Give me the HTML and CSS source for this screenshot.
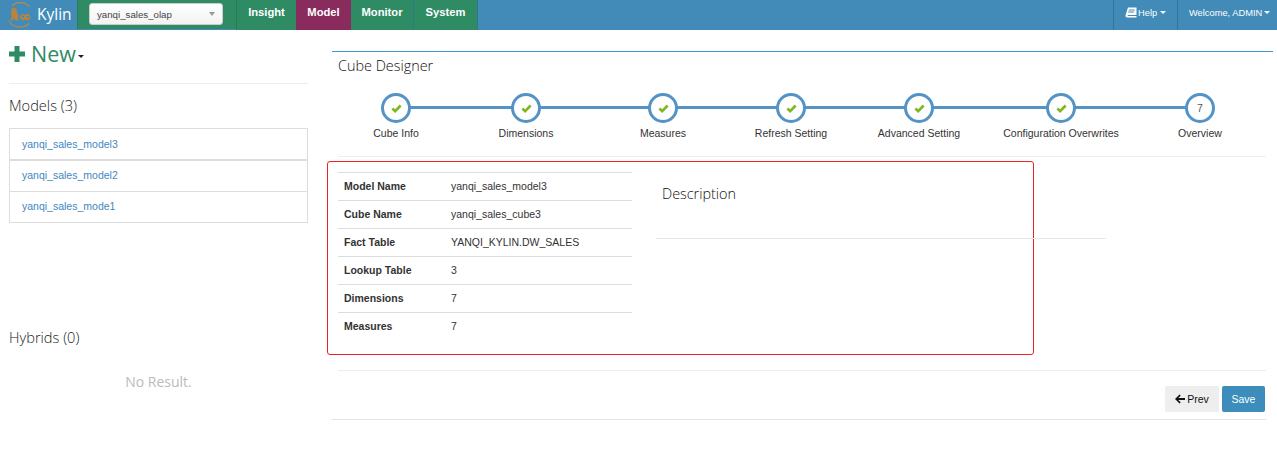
FILE: index.html
```html
<!DOCTYPE html>
<html lang="en">
<head>
<meta charset="utf-8">
<title>Kylin</title>
<link rel="stylesheet" href="styles.css">
</head>
<body>
<header class="navbar">
  <a class="brand">
    <svg class="logo" width="30" height="28" viewBox="0 0 30 28"><g fill="none" stroke="#b98a45" stroke-width="1.1"><path d="M24.500 5.500A13 13 0 0 0 7 4.500"/><path d="M4 20a13 13 0 0 0 20 2.500"/></g><path fill="#b9843c" d="M6 8l3-1.500 2.500 1.500.5 4 1.500 2.500-1 3.500 2 1.500-4.500 0-.5-3-2 3-2.500-.5 2-3.500-1.500-3.500 1.500-2z"/><path fill="#b9843c" d="M14.500 16l3-3 2.500 1 1.500-1.500 3 1.500 1 3-2.500 2.500-3-1-2 1-2.500-2z"/><circle cx="18" cy="16" r="1.100" fill="#4289b8"/><circle cx="23" cy="16" r="1.100" fill="#4289b8"/></svg>
    <span>Kylin</span>
  </a>
  <div class="project">
    <div class="select"><span>yanqi_sales_olap</span><i class="select-caret"></i></div>
  </div>
  <nav class="tabs">
    <a class="tab tab-insight">Insight</a>
    <a class="tab tab-active">Model</a>
    <a class="tab tab-monitor">Monitor</a>
    <a class="tab tab-system">System</a>
  </nav>
  <div class="user-menu">
    <a class="menu-item menu-help">
      <svg width="12" height="11" viewBox="0 0 12 11"><path fill="#fff" d="M3 .5h8.500v7.200L10.800 8H3.200c-.7 0-.9.900-.2 1h8.500v1.500H2.500C1 10.500.2 9.300.6 8zM3.800 2.500l-.2 1h6l.2-1zM3.300 4.500l-.2 1h6l.2-1z"/></svg>
      <span>Help</span><i class="caret"></i>
    </a>
    <a class="menu-item menu-user"><span>Welcome, ADMIN</span><i class="caret"></i></a>
  </div>
</header>

<main class="page">
  <aside class="sidebar">
    <div class="new-row">
      <svg width="16" height="16" viewBox="0 0 16 16"><path fill="#2e8b63" d="M5.500 0h5v5.500H16v5h-5.500V16h-5v-5.500H0v-5h5.500z"/></svg>
      <span class="new-label">New</span><i class="caret caret-dark"></i>
    </div>
    <hr class="side-rule">
    <h3 class="side-title">Models (3)</h3>
    <ul class="model-list">
      <li class="model-item model-first"><a>yanqi_sales_model3</a></li>
      <li class="model-item"><a>yanqi_sales_model2</a></li>
      <li class="model-item"><a>yanqi_sales_mode1</a></li>
    </ul>
    <h3 class="side-title hybrids">Hybrids (0)</h3>
    <p class="no-result">No Result.</p>
  </aside>

  <section class="designer">
    <h2 class="designer-title">Cube Designer</h2>
    <ol class="stepper">
      <li class="step"><span class="dot"><svg width="11" height="9" viewBox="0 0 14 12"><path fill="none" stroke="#83b520" stroke-width="3.500" d="M1.500 6l3.700 3.500L12.500 2"/></svg></span><span class="step-label">Cube Info</span></li>
      <li class="step"><span class="dot"><svg width="11" height="9" viewBox="0 0 14 12"><path fill="none" stroke="#83b520" stroke-width="3.500" d="M1.500 6l3.700 3.500L12.500 2"/></svg></span><span class="step-label">Dimensions</span></li>
      <li class="step"><span class="dot"><svg width="11" height="9" viewBox="0 0 14 12"><path fill="none" stroke="#83b520" stroke-width="3.500" d="M1.500 6l3.700 3.500L12.500 2"/></svg></span><span class="step-label">Measures</span></li>
      <li class="step"><span class="dot"><svg width="11" height="9" viewBox="0 0 14 12"><path fill="none" stroke="#83b520" stroke-width="3.500" d="M1.500 6l3.700 3.500L12.500 2"/></svg></span><span class="step-label">Refresh Setting</span></li>
      <li class="step"><span class="dot"><svg width="11" height="9" viewBox="0 0 14 12"><path fill="none" stroke="#83b520" stroke-width="3.500" d="M1.500 6l3.700 3.500L12.500 2"/></svg></span><span class="step-label">Advanced Setting</span></li>
      <li class="step"><span class="dot"><svg width="11" height="9" viewBox="0 0 14 12"><path fill="none" stroke="#83b520" stroke-width="3.500" d="M1.500 6l3.700 3.500L12.500 2"/></svg></span><span class="step-label">Configuration Overwrites</span></li>
      <li class="step"><span class="dot dot-number">7</span><span class="step-label">Overview</span></li>
    </ol>
    <hr class="rule rule-steps">
    <div class="panel">
      <table class="info">
        <tr><th>Model Name</th><td>yanqi_sales_model3</td></tr>
        <tr><th>Cube Name</th><td>yanqi_sales_cube3</td></tr>
        <tr><th>Fact Table</th><td>YANQI_KYLIN.DW_SALES</td></tr>
        <tr><th>Lookup Table</th><td>3</td></tr>
        <tr><th>Dimensions</th><td>7</td></tr>
        <tr><th>Measures</th><td>7</td></tr>
      </table>
      <div class="description">
        <h3 class="description-title">Description</h3>
        <hr class="description-rule">
      </div>
    </div>
    <hr class="rule rule-panel">
    <div class="actions">
      <button class="btn btn-prev" type="button"><svg width="10" height="10" viewBox="0 0 11 10"><path fill="#111" d="M5 0l1.300 1.300L3.600 4H11v2H3.600l2.700 2.700L5 10 0 5z"/></svg> Prev</button>
      <button class="btn btn-save" type="button">Save</button>
    </div>
    <hr class="rule rule-bottom">
  </section>
</main>
</body>
</html>
```
FILE: styles.css
```css
* { box-sizing: border-box; }
html, body { margin: 0; padding: 0; }
body {
  background: #fff;
  color: #333;
  font-family: "Liberation Sans", Arial, sans-serif;
  font-size: 10.5px;
  overflow: hidden;
}
hr { border: 0; margin: 0; }
ul, ol { list-style: none; margin: 0; padding: 0; }
h2, h3, p { margin: 0; font-weight: 400; }

.navbar { display: flex; height: 30px; background: #428bb9; color: #fff; }
.brand { display: flex; align-items: center; width: 77px; padding-left: 5px; gap: 2px; font: 400 15.5px/1 "Open Sans", sans-serif; }
.project { display: flex; align-items: center; width: 159px; padding: 0 13px 1px 11px; background: #2e8b63; border-left: 1px solid #2a7a5a; height: 29px; }
.select { display: flex; align-items: center; justify-content: space-between; width: 134px; height: 22px; padding: 0 7px; background: linear-gradient(#fff, #f2f2f2); border: 1px solid #ccc; border-radius: 3px; color: #444; font-size: 9.7px; }
.select-caret { width: 0; height: 0; border-left: 3px solid transparent; border-right: 3px solid transparent; border-top: 4px solid #999; }
.tabs { display: flex; }
.tab { display: flex; align-items: center; justify-content: center; height: 30px; padding-bottom: 6px; font-size: 11.2px; font-weight: 700; color: #fff; background: #2e8b63; }
.tab-insight { width: 60px; border-left: 1px solid #2a7a5a; }
.tab-active { width: 55px; background: #8a2b5e; }
.tab-monitor { width: 63px; border-right: 1px solid #2a7a8a; }
.tab-system { width: 64px; border-right: 1px solid #2a7a8a; }
.user-menu { display: flex; margin-left: auto; }
.menu-item { display: flex; align-items: center; height: 30px; padding-bottom: 5px; border-left: 1px solid #33759f; font-size: 9.3px; color: #fff; }
.menu-help { width: 64px; padding-left: 11px; gap: 1px; }
.menu-user { width: 100px; padding-left: 11px; }
.caret { display: inline-block; width: 0; height: 0; margin-left: 2px; border-left: 3.5px solid transparent; border-right: 3.5px solid transparent; border-top: 3.5px solid #fff; }
.caret-dark { border-left-width: 3px; border-right-width: 3px; border-top: 3px solid #222; margin: 6px 0 0 2px; }

.page { display: flex; align-items: flex-start; }
.sidebar { width: 332px; padding: 0 24px 0 9px; flex: none; }
.new-row { display: flex; align-items: center; height: 46px; padding-top: 1px; }
.new-label { margin-left: 6px; font: 400 21.500px/1 "Open Sans", sans-serif; color: #2e8b63; }
.side-rule { height: 1px; margin-top: 7px; background: #eee; }
.side-title { font: 300 14.6px/18px "Open Sans", sans-serif; color: #222; margin-top: 12px; }
.model-list { margin-top: 14px; }
.model-item { height: 31px; border: 1px solid #ddd; border-top: 0; padding: 0 12px 3px; display: flex; align-items: center; color: #3f87c2; }
.model-first { height: 33px; padding-bottom: 1px; border-top: 1px solid #ddd; border-bottom-width: 2px; }
.hybrids { margin-top: 105px; }
.no-result { margin-top: 26px; text-align: center; font: 400 14px/20px "Open Sans", sans-serif; color: #bbb; }

.designer { width: 941px; flex: none; margin-top: 21px; padding: 0 7px 0 6px; border-top: 1px solid #3f98d0; }
.designer-title { font: 300 14.4px/20px "Open Sans", sans-serif; color: #111; margin-top: 4px; }
.stepper { position: relative; display: grid; grid-template-columns: 130px 130px 144px 112px 144px 140px 138px; margin: 17px 0 0 -7px; }
.stepper::before { content: ""; position: absolute; left: 65px; right: 69px; top: 13px; height: 3px; background: #5393c5; }
.step { position: relative; display: flex; flex-direction: column; align-items: center; }
.dot { display: flex; align-items: center; justify-content: center; width: 30px; height: 30px; border: 3.500px solid #5393c5; border-radius: 50%; background: #fff; }
.dot-number { font-size: 10.500px; color: #555; }
.step-label { margin-top: 4px; line-height: 12px; white-space: nowrap; color: #333; }
.rule { height: 1px; background: #eee; }
.rule-steps { margin-top: 17px; }
.panel { display: flex; width: 707px; height: 194px; margin: 4px 0 0 -11px; padding: 10px 0 0 10px; border: 1px solid #ee2222; border-radius: 3px; }
.info { flex: none; width: 294px; height: 168px; border-collapse: collapse; table-layout: fixed; }
.info th, .info td { height: 28px; padding: 0 6px 2px; border-top: 1px solid #ddd; text-align: left; color: #333; }
.info th { width: 107px; font-weight: 700; }
.description { flex: none; width: 450px; margin-left: 24px; }
.description-title { font: 300 14.4px/20px "Open Sans", sans-serif; padding: 12px 0 0 6px; color: #111; height: 32px; }
.description-rule { height: 1px; margin-top: 34px; background: #e8e8e8; }
.rule-panel { margin-top: 15px; }
.actions { display: flex; justify-content: flex-end; gap: 3px; margin-top: 15px; padding-right: 1px; }
.btn { display: flex; align-items: center; justify-content: center; height: 26px; border: 0; border-radius: 2px; font: 400 10.500px "Liberation Sans", Arial, sans-serif; }
.btn-prev { width: 54px; gap: 2px; background: #eee; color: #111; }
.btn-save { width: 43px; background: #3c8dbc; color: #fff; }
.rule-bottom { height: 1px; margin: 7px 0 0 -6px; background: #e4e4e4; }
```
